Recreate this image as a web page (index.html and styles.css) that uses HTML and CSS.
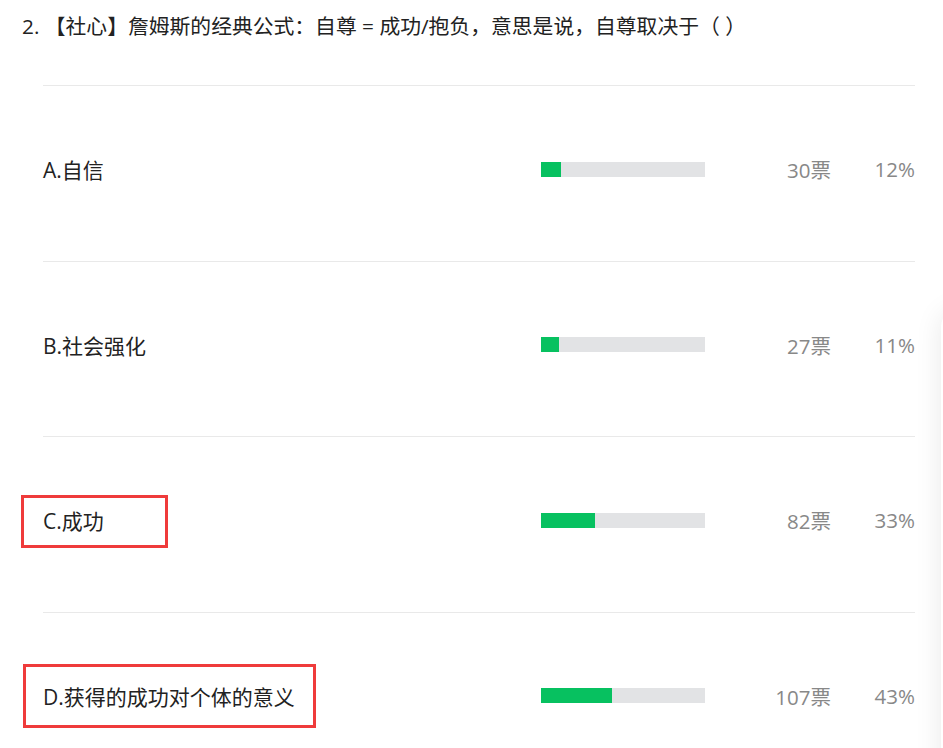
FILE: index.html
```html
<!DOCTYPE html>
<html lang="zh-CN">
<head>
<meta charset="utf-8">
<title>投票结果</title>
<link rel="stylesheet" href="styles.css">
</head>
<body>
<div class="page">
  <div class="question">2. 【社心】詹姆斯的经典公式：自尊 = 成功/抱负，意思是说，自尊取决于（ ）</div>
  <ul class="options">
    <li class="option">
      <span class="label">A.自信</span>
      <span class="bar"><span class="fill" style="width:12%"></span></span>
      <span class="votes">30票</span>
      <span class="pct">12%</span>
    </li>
    <li class="option">
      <span class="label">B.社会强化</span>
      <span class="bar"><span class="fill" style="width:11%"></span></span>
      <span class="votes">27票</span>
      <span class="pct">11%</span>
    </li>
    <li class="option">
      <span class="label">C.成功</span>
      <span class="bar"><span class="fill" style="width:33%"></span></span>
      <span class="votes">82票</span>
      <span class="pct">33%</span>
      <span class="mark mark-c"></span>
    </li>
    <li class="option">
      <span class="label">D.获得的成功对个体的意义</span>
      <span class="bar"><span class="fill" style="width:43%"></span></span>
      <span class="votes">107票</span>
      <span class="pct">43%</span>
      <span class="mark mark-d"></span>
    </li>
  </ul>
  <div class="side-panel"></div>
</div>
</body>
</html>
```
FILE: styles.css
```css
html, body {
  margin: 0;
  padding: 0;
  overflow: hidden;
  background: #fff;
}
body {
  font-family: "Open Sans", "Noto Sans CJK SC", sans-serif;
  color: #222;
  text-spacing-trim: space-all;
}
.page {
  position: relative;
  width: 943px;
  height: 748px;
  overflow: hidden;
}
.question {
  padding-left: 22px;
  font-size: 20.8px;
  line-height: 53px;
  height: 56px;
  white-space: nowrap;
}
.options {
  list-style: none;
  margin: 29px 0 0 43px;
  padding: 0;
  width: 872px;
}
.option {
  position: relative;
  box-sizing: border-box;
  height: 175.5px;
  padding-bottom: 8px;
  border-top: 1px solid #e9e9e9;
  display: grid;
  grid-template-columns: 498px 164px 126px 84px;
  align-items: center;
  font-size: 20.5px;
}
.label {
  color: #222;
  font-size: 21px;
  white-space: nowrap;
}
.bar {
  display: block;
  height: 15px;
  background: #e2e3e5;
}
.fill {
  display: block;
  height: 100%;
  background: #07c160;
}
.votes, .pct {
  text-align: right;
  color: #888;
}
.mark {
  position: absolute;
  border: 3px solid #ef3b3b;
  box-sizing: border-box;
}
.mark-c {
  left: -22px;
  top: 58px;
  width: 147px;
  height: 53px;
}
.mark-d {
  left: -20px;
  top: 51px;
  width: 293px;
  height: 64px;
}
.side-panel {
  position: absolute;
  left: 941px;
  top: 312px;
  width: 120px;
  height: 600px;
  background: #fff;
  border-radius: 14px;
  box-shadow: 0 0 28px rgba(0, 0, 0, 0.09);
}
```
